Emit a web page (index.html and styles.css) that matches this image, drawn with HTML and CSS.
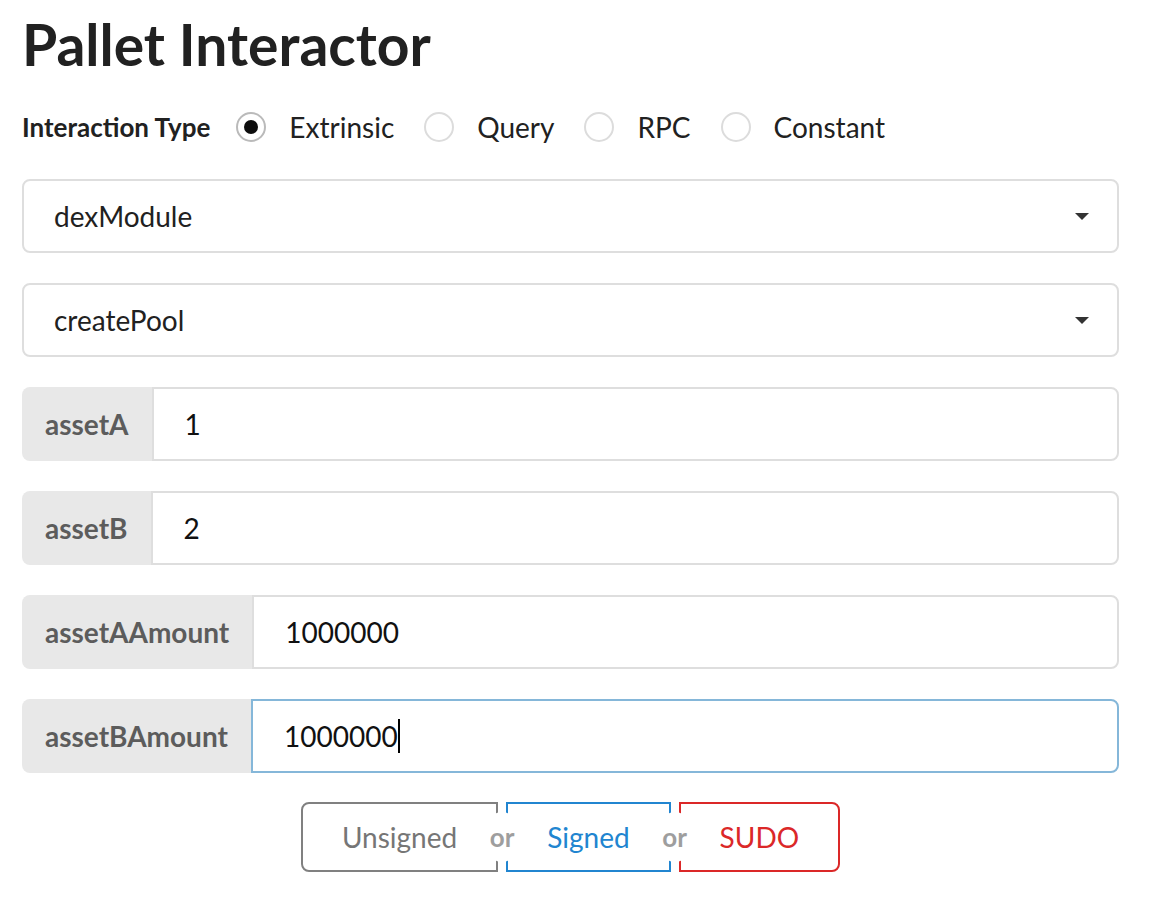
FILE: index.html
```html
<!DOCTYPE html>
<html>
<head>
<meta charset="utf-8">
<link rel="stylesheet" href="styles.css">
</head>
<body>
<div class="page">
  <h1 class="title">Pallet Interactor</h1>
  <div class="type-row">
    <span class="type-label">Interaction Type</span>
    <label class="radio"><span class="circle checked"></span><span class="radio-text">Extrinsic</span></label>
    <label class="radio"><span class="circle"></span><span class="radio-text">Query</span></label>
    <label class="radio"><span class="circle"></span><span class="radio-text">RPC</span></label>
    <label class="radio"><span class="circle"></span><span class="radio-text">Constant</span></label>
  </div>
  <div class="field dropdown"><span class="dd-text">dexModule</span><span class="caret"></span></div>
  <div class="field dropdown"><span class="dd-text">createPool</span><span class="caret"></span></div>
  <div class="field labeled"><span class="in-label">assetA</span><span class="in-box"><span class="in-text">1</span></span></div>
  <div class="field labeled"><span class="in-label">assetB</span><span class="in-box"><span class="in-text">2</span></span></div>
  <div class="field labeled"><span class="in-label">assetAAmount</span><span class="in-box"><span class="in-text">1000000</span></span></div>
  <div class="field labeled"><span class="in-label">assetBAmount</span><span class="in-box focus"><span class="in-text">1000000</span><span class="cursor"></span></span></div>
  <div class="btn-row">
    <div class="buttons">
      <span class="btn grey">Unsigned</span>
      <span class="or"><span class="or-text">or</span></span>
      <span class="btn blue">Signed</span>
      <span class="or"><span class="or-text">or</span></span>
      <span class="btn red">SUDO</span>
    </div>
  </div>
</div>
</body>
</html>
```
FILE: styles.css
```css
* { box-sizing: border-box; }
html, body { margin: 0; padding: 0; background: #fff; }
body { font-family: Lato, "Open Sans", sans-serif; color: rgba(0,0,0,.87); }
.page { padding: 0 37px 0 22px; width: 1156px; }
.title {
  margin: 0; padding-top: 12px;
  font-size: 57px; font-weight: 700; line-height: 64px; color: #212121;
}
.type-row {
  display: flex; align-items: center; height: 32px;
  margin-top: 35px; margin-bottom: 36px;
}
.type-label { font-size: 26px; font-weight: 700; color: #212121; margin-right: 26px; }
.radio { display: flex; align-items: center; margin-right: 30px; }
.circle {
  width: 30px; height: 30px; border-radius: 50%;
  border: 2px solid #dcdcdc; background: #fff; position: relative;
  margin-right: 23px;
}
.circle.checked { border-color: #bababa; }
.circle.checked::after {
  content: ""; position: absolute; left: 6px; top: 6px;
  width: 14px; height: 14px; border-radius: 50%; background: #0d0d0d;
}
.radio-text { font-size: 28px; color: #212121; }
.field { height: 74px; margin-bottom: 30px; display: flex; }
.dropdown {
  border: 2px solid #dedede; border-radius: 8px; align-items: center;
  padding: 0 28px 0 30px; justify-content: space-between;
}
.dd-text { font-size: 28px; color: #212121; }
.caret {
  width: 0; height: 0;
  border-left: 7px solid transparent; border-right: 7px solid transparent;
  border-top: 7px solid #333;
}
.in-label {
  background: #e8e8e8; color: #5c5c5c; font-weight: 700; font-size: 28px;
  border-radius: 8px 0 0 8px; display: flex; align-items: center;
  padding: 0 23px; height: 100%;
}
.in-box {
  flex: 1; border: 2px solid #dedede; border-radius: 0 8px 8px 0;
  display: flex; align-items: center; padding-left: 31px;
}
.in-box.focus { border-color: #85b7d9; }
.in-text { font-size: 28px; color: #111; }
.cursor { width: 2px; height: 34px; background: #000; }
.btn-row { display: flex; justify-content: center; margin-top: -1px; }
.buttons { display: flex; }
.btn {
  height: 70px; display: flex; align-items: center; padding: 0 39px;
  font-size: 28px; border: 2px solid; background: #fff;
}
.btn.grey { color: #767676; border-color: #808080; border-radius: 8px 0 0 8px; }
.btn.blue { color: #2185d0; border-color: #2185d0; }
.btn.red { color: #db2828; border-color: #db2828; border-radius: 0 8px 8px 0; }
.or { width: 8px; position: relative; }
.or-text {
  position: absolute; left: 50%; top: 10px; transform: translateX(-50%);
  width: 40px; height: 50px; background: #fff; border-radius: 50%;
  display: flex; align-items: center; justify-content: center;
  font-size: 26px; font-weight: 700; color: #9e9e9e;
}
```
